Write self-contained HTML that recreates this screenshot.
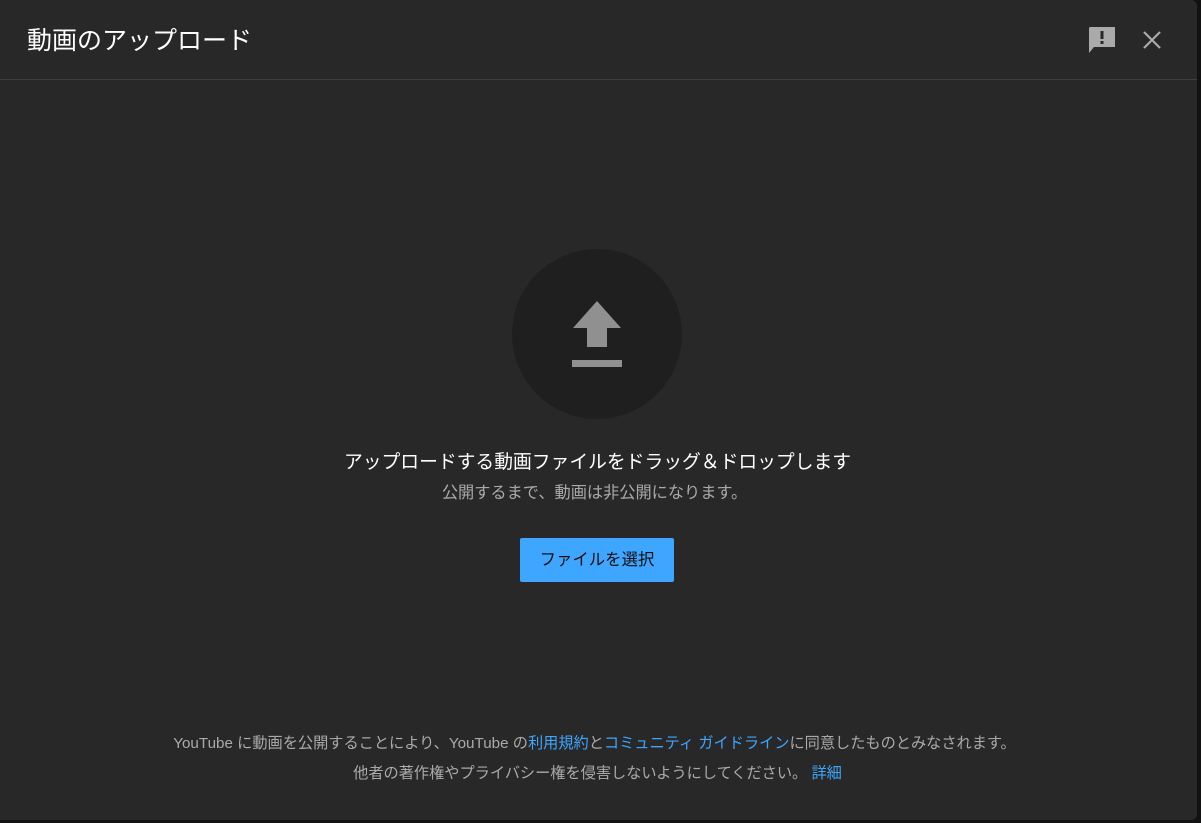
<!DOCTYPE html>
<html><head><meta charset="utf-8"><style>
html,body{margin:0;padding:0;background:#121212;width:1201px;height:823px;overflow:hidden}
body{font-family:"Liberation Sans","Noto Sans CJK JP",sans-serif;position:relative}
.dlg{position:absolute;left:0;top:0;width:1197px;height:820px;background:#282828;border-radius:0 6px 6px 0;overflow:hidden}
.hdr{position:absolute;left:0;top:0;width:100%;height:79px;border-bottom:1px solid #3e3e3e}
.title{position:absolute;left:27px;top:24px;font-size:25px;color:#fff;line-height:34px}
.circle{position:absolute;left:512px;top:249px;width:170px;height:170px;border-radius:50%;background:#1f1f1f}
.t1{position:absolute;left:0;width:1195px;top:449px;text-align:center;color:#fff;font-size:18.8px;line-height:26px}
.t2{position:absolute;left:0;width:1189px;top:482px;text-align:center;color:#aaa;font-size:16.2px;line-height:22px}
.btn{position:absolute;left:520px;top:538px;width:154px;height:44px;background:#3ea6ff;border-radius:2px;color:#0d0d0d;font-size:16.4px;line-height:44px;text-align:center}
.f1{position:absolute;left:0;width:1189px;top:733px;text-align:center;color:#aaa;font-size:15.2px;line-height:22px}
.f2{position:absolute;left:0;width:1195px;top:763px;text-align:center;color:#aaa;font-size:15.2px;line-height:22px}
a{color:#3ea6ff;text-decoration:none}
</style></head><body>
<div class="dlg">
<div class="hdr">
<div class="title">動画のアップロード</div>
<svg style="position:absolute;left:1088px;top:26px" width="28" height="28" viewBox="0 0 28 28">
<path d="M2 1H27V21H6L1 27V2Z" fill="#aaa"/>
<rect x="12.5" y="5" width="3" height="8" fill="#282828"/>
<rect x="12.5" y="15" width="3" height="3" fill="#282828"/>
</svg>
<svg style="position:absolute;left:1142px;top:30px" width="20" height="20" viewBox="0 0 20 20">
<path d="M2 2L18 18M18 2L2 18" stroke="#aaa" stroke-width="2.2"/>
</svg>
</div>
<div class="circle"></div>
<svg style="position:absolute;left:560px;top:290px" width="80" height="90" viewBox="560 290 80 90">
<path d="M597 301L621 328H607V347H587V328H573Z" fill="#909090"/>
<rect x="572" y="360" width="50" height="7" fill="#909090"/>
</svg>
<div class="t1">アップロードする動画ファイルをドラッグ＆ドロップします</div>
<div class="t2">公開するまで、動画は非公開になります。</div>
<div class="btn">ファイルを選択</div>
<div class="f1">YouTube に動画を公開することにより、YouTube の<a>利用規約</a>と<a>コミュニティ ガイドライン</a>に同意したものとみなされます。</div>
<div class="f2">他者の著作権やプライバシー権を侵害しないようにしてください。 <a>詳細</a></div>
</div>
</body></html>
